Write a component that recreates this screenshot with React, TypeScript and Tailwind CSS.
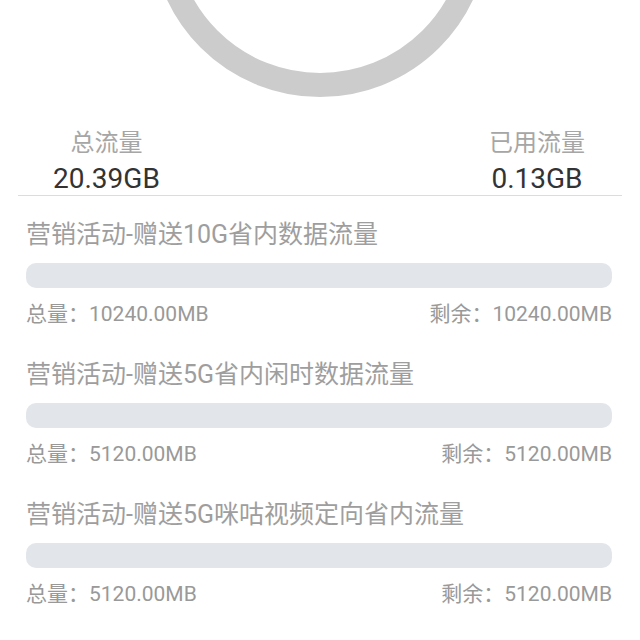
const items = [
  { name: "营销活动-赠送10G省内数据流量", total: "10240.00MB", left: "10240.00MB" },
  { name: "营销活动-赠送5G省内闲时数据流量", total: "5120.00MB", left: "5120.00MB" },
  { name: "营销活动-赠送5G咪咕视频定向省内流量", total: "5120.00MB", left: "5120.00MB" },
];

const font = { fontFamily: '"Roboto", "Noto Sans CJK SC", sans-serif' };

export default function App() {
  return (
    <div className="w-[640px] h-[640px] overflow-hidden bg-white" style={font}>
      {/* ring gauge */}
      <div className="h-[112px]">
        <svg width="640" height="112" viewBox="0 0 640 112">
          <circle cx="320" cy="-72" r="157" fill="none" stroke="#cccccc" strokeWidth="24" />
        </svg>
      </div>

      <div className="mx-[18px] border-b border-[#dcdcdc] flex justify-between pl-[35px] pr-[37px] pt-[19px] pb-[2px]">
        <div className="flex flex-col items-center">
          <div className="text-[24px] leading-[24px] text-[#a6a6a6]">总流量</div>
          <div className="mt-[10px] text-[28px] leading-[28px] text-[#333333]">20.39GB</div>
        </div>
        <div className="flex flex-col items-center">
          <div className="text-[24px] leading-[24px] text-[#a6a6a6]">已用流量</div>
          <div className="mt-[10px] text-[28px] leading-[28px] text-[#333333]">0.13GB</div>
        </div>
      </div>

      <div className="flex flex-col gap-[37px] pt-[26px] pl-[26px] pr-[28px]">
        {items.map((item) => (
          <div key={item.name}>
            <div className="text-[25px] leading-[25px] text-[#9e9e9e] whitespace-nowrap">{item.name}</div>
            <div className="mt-[16px] h-[25px] rounded-[10px] bg-[#e2e5ea]" />
            <div className="mt-[16px] flex justify-between text-[21px] leading-[21px] text-[#999999]">
              <span>总量：{item.total}</span>
              <span>剩余：{item.left}</span>
            </div>
          </div>
        ))}
      </div>
    </div>
  );
}
